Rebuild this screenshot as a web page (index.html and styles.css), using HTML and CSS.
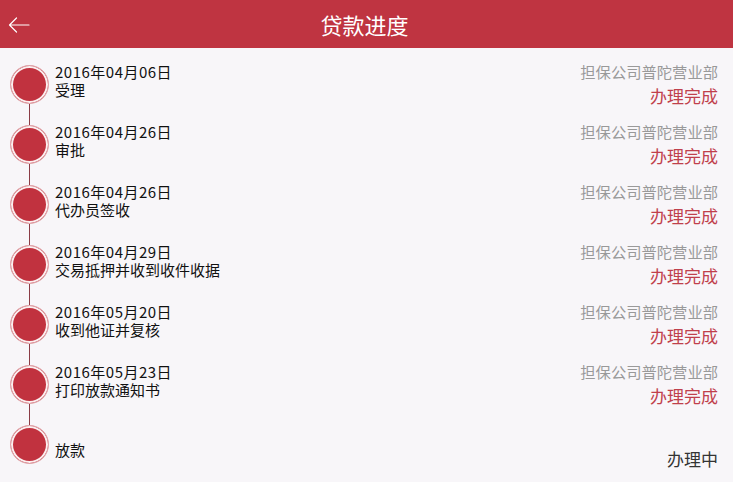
FILE: index.html
```html
<!DOCTYPE html>
<html lang="zh-CN">
<head>
<meta charset="utf-8">
<title>贷款进度</title>
<link rel="stylesheet" href="styles.css">
</head>
<body>
<header class="bar">
  <svg class="back" width="22" height="16" viewBox="0 0 22 16" fill="none" stroke="#fff" stroke-width="1.2" stroke-linecap="round" stroke-linejoin="round"><path d="M21 8H1.5M8.5 1L1.5 8L8.5 15"/></svg>
  <h1 class="title">贷款进度</h1>
</header>
<ul class="timeline">
  <li class="step">
    <div class="node"><span class="seg seg-none"></span><span class="dot"></span><span class="seg"></span></div>
    <div class="info"><div class="date">2016年04月06日</div><div class="name">受理</div></div>
    <div class="side"><div class="org">担保公司普陀营业部</div><div class="state done">办理完成</div></div>
  </li>
  <li class="step">
    <div class="node"><span class="seg"></span><span class="dot"></span><span class="seg"></span></div>
    <div class="info"><div class="date">2016年04月26日</div><div class="name">审批</div></div>
    <div class="side"><div class="org">担保公司普陀营业部</div><div class="state done">办理完成</div></div>
  </li>
  <li class="step">
    <div class="node"><span class="seg"></span><span class="dot"></span><span class="seg"></span></div>
    <div class="info"><div class="date">2016年04月26日</div><div class="name">代办员签收</div></div>
    <div class="side"><div class="org">担保公司普陀营业部</div><div class="state done">办理完成</div></div>
  </li>
  <li class="step">
    <div class="node"><span class="seg"></span><span class="dot"></span><span class="seg"></span></div>
    <div class="info"><div class="date">2016年04月29日</div><div class="name">交易抵押并收到收件收据</div></div>
    <div class="side"><div class="org">担保公司普陀营业部</div><div class="state done">办理完成</div></div>
  </li>
  <li class="step">
    <div class="node"><span class="seg"></span><span class="dot"></span><span class="seg"></span></div>
    <div class="info"><div class="date">2016年05月20日</div><div class="name">收到他证并复核</div></div>
    <div class="side"><div class="org">担保公司普陀营业部</div><div class="state done">办理完成</div></div>
  </li>
  <li class="step">
    <div class="node"><span class="seg"></span><span class="dot"></span><span class="seg"></span></div>
    <div class="info"><div class="date">2016年05月23日</div><div class="name">打印放款通知书</div></div>
    <div class="side"><div class="org">担保公司普陀营业部</div><div class="state done">办理完成</div></div>
  </li>
  <li class="step step-last">
    <div class="node"><span class="seg"></span><span class="dot"></span><span class="seg seg-none"></span></div>
    <div class="info info-single"><div class="name">放款</div></div>
    <div class="side side-single"><div class="state doing">办理中</div></div>
  </li>
</ul>
</body>
</html>
```
FILE: styles.css
```css
* { box-sizing: border-box; }
html, body { margin: 0; padding: 0; }
body {
  width: 733px;
  height: 482px;
  overflow: hidden;
  background: #f8f6f9;
  font-family: "Noto Sans CJK SC", "Noto Sans", sans-serif;
  color: #111;
}
.bar {
  height: 48px;
  background: #bf3441;
  display: flex;
  align-items: center;
  justify-content: center;
  position: relative;
}
.back {
  position: absolute;
  left: 8px;
  top: 17px;
}
.title {
  margin: 0 0 0 -4px;
  font-size: 22px;
  font-weight: 400;
  color: #fff;
  line-height: 1;
}
.timeline {
  list-style: none;
  margin: 0;
  padding: 6px 15px 0 10px;
}
.step {
  display: flex;
  height: 60px;
}
.node {
  width: 39px;
  display: flex;
  flex-direction: column;
  align-items: center;
  flex: none;
}
.seg {
  flex: 1;
  width: 1px;
  background: #8a3b45;
}
.seg-none { background: transparent; }
.dot {
  width: 39px;
  height: 39px;
  border-radius: 50%;
  background: #c1323f;
  border: 1px solid #e1a9ad;
  box-shadow: inset 0 0 0 2px #fbeff0;
  flex: none;
}
.info {
  flex: 1;
  padding-left: 6px;
  display: flex;
  flex-direction: column;
  justify-content: center;
  padding-bottom: 6px;
  font-size: 15px;
  line-height: 18px;
}
.date { letter-spacing: 0.5px; }
.info-single { padding-top: 12px; padding-bottom: 0; }
.side {
  display: flex;
  flex-direction: column;
  align-items: flex-end;
  justify-content: center;
}
.org {
  font-size: 15.3px;
  line-height: 22px;
  color: #999;
}
.state {
  font-size: 17px;
  line-height: 24px;
  margin-top: 2px;
}
.done { color: #c0404c; }
.doing { color: #333; margin-top: 0; }
.side-single { padding-top: 30px; }
```
